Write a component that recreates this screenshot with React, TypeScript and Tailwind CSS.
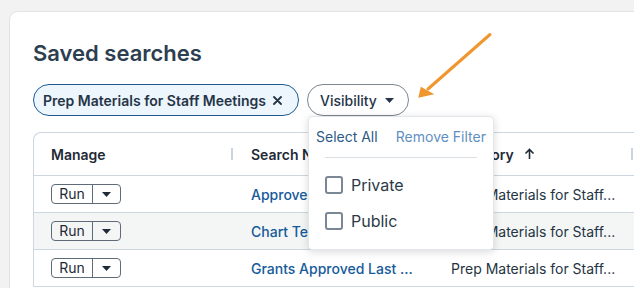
import React from "react";

const Caret = ({ className = "" }: { className?: string }) => (
  <svg className={className} width="9" height="5" viewBox="0 0 9 5">
    <path d="M0 0 L9 0 L4.5 5 Z" fill="currentColor" />
  </svg>
);

const RunButton = () => (
  <div className="flex h-[20px] w-[70px] items-stretch rounded-[4px] border border-[#5f6b76] text-[#1f2a37]">
    <div className="flex w-[41px] items-center justify-center border-r border-[#5f6b76] text-[14px] leading-none">
      Run
    </div>
    <div className="flex flex-1 items-center justify-center">
      <Caret className="text-[#1f2a37]" />
    </div>
  </div>
);

const rows = [
  { name: "Approved Grants", cat: "Prep Materials for Staff...", bg: "bg-white" },
  { name: "Chart Test", cat: "Prep Materials for Staff...", bg: "bg-[#f4f6f6]" },
  { name: "Grants Approved Last ...", cat: "Prep Materials for Staff...", bg: "bg-white" },
];

export default function App() {
  return (
    <div
      className="relative h-[288px] w-[634px] overflow-hidden bg-[#f2f2f2] pl-[9px] pt-[11px]"
      style={{ fontFamily: "Inter, 'Noto Sans', sans-serif" }}
    >
      <div className="h-[320px] w-[700px] rounded-tl-[9px] border border-[#e2e2e2] bg-white pl-[23px] pt-[25px]">
        <h1 className="h-[32px] text-[22px] font-semibold leading-[32px] text-[#2c3e50]">
          Saved searches
        </h1>
        <div className="mt-[15px] flex h-[32px] items-center gap-[8px]">
          <div className="flex h-[32px] w-[266px] items-center rounded-full border border-[#1d5a94] bg-[#eef6fd] pl-[9px] text-[14px] font-semibold text-[#253547]">
            <span>Prep Materials for Staff Meetings</span>
            <svg className="ml-[7px]" width="9" height="9" viewBox="0 0 9 9">
              <path d="M1 1 L8 8 M8 1 L1 8" stroke="#253547" strokeWidth="1.8" strokeLinecap="round" />
            </svg>
          </div>
          <div className="relative">
            <div className="flex h-[32px] w-[102px] items-center rounded-full border border-[#7b8792] bg-white pl-[12px] text-[14px] font-medium text-[#253547]">
              <span>Visibility</span>
              <Caret className="ml-[8px] text-[#253547]" />
            </div>
            <div className="absolute left-[1px] top-[32px] z-10 h-[134px] w-[186px] rounded-[4px] border border-[#e3e6ea] bg-white pt-[10px] shadow-[0_2px_8px_rgba(0,0,0,0.15)]">
              <div className="flex items-center justify-between px-[7px] text-[14px] leading-[20px]">
                <span className="text-[#2d5a86]">Select All</span>
                <span className="text-[#5f8fbf]">Remove Filter</span>
              </div>
              <div className="mx-[16px] mt-[10px] h-px bg-[#d9dee3]" />
              <div className="mt-[18px] flex flex-col gap-[18px] pl-[16px]">
                {["Private", "Public"].map((l) => (
                  <div key={l} className="flex h-[18px] items-center gap-[8px]">
                    <div className="h-[18px] w-[18px] rounded-[3px] border-2 border-[#7b8794] bg-white" />
                    <span className="text-[16px] text-[#2c3a48]">{l}</span>
                  </div>
                ))}
              </div>
            </div>
          </div>
        </div>
        <div className="mt-[16px] w-[700px] rounded-tl-[8px] border-l border-t border-[#cdd7e1]">
          <div className="flex h-[43px] items-center border-b border-[#cdd7e1] text-[14px] font-semibold text-[#1f2a37]">
            <div className="flex w-[199px] items-center justify-between pl-[17px]">
              <span>Manage</span>
              <div className="h-[12px] w-[2px] bg-[#c9d4de]" />
            </div>
            <div className="flex w-[200px] items-center justify-between pl-[18px]">
              <span>Search Name</span>
              <div className="h-[12px] w-[2px] bg-[#c9d4de]" />
            </div>
            <div className="flex w-[200px] items-center justify-between pl-[18px]">
              <span className="flex items-center gap-[10px]">
                Category
                <svg width="11" height="12" viewBox="0 0 11 12">
                  <path d="M5.5 11 V1.5 M1.5 5.5 L5.5 1.5 L9.5 5.5" stroke="#1f2a37" strokeWidth="1.6" fill="none" />
                </svg>
              </span>
              <div className="h-[12px] w-[2px] bg-[#c9d4de]" />
            </div>
          </div>
          {rows.map((r, i) => (
            <div key={i} className={`flex h-[37px] items-center border-b border-[#cdd7e1] ${r.bg}`}>
              <div className="w-[199px] pl-[17px]">
                <RunButton />
              </div>
              <div className="w-[200px] pl-[18px] text-[14px] font-medium text-[#165a9a]">{r.name}</div>
              <div className="w-[200px] pl-[18px] text-[14px] text-[#253342]">{r.cat}</div>
            </div>
          ))}
        </div>
      </div>
      <svg className="absolute left-0 top-0" width="634" height="288" viewBox="0 0 634 288">
        <path d="M490 34.5 L428 89" stroke="#f0962f" strokeWidth="3" strokeLinecap="round" />
        <path d="M418.3 97.8 L420.8 86.8 L434.3 94.3 Z" fill="#f0962f" />
      </svg>
    </div>
  );
}
